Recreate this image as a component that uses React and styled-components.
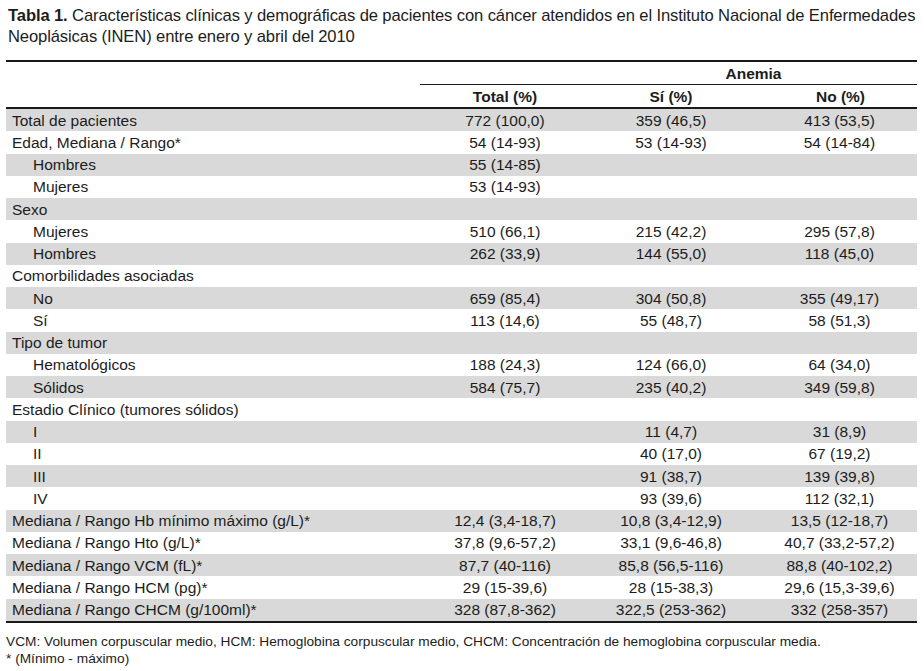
import React from "react";
import styled, { createGlobalStyle } from "styled-components";

const Global = createGlobalStyle`
  html, body { margin: 0; padding: 0; background: #fff; }
  body {
    font-family: "Liberation Sans", Arial, Helvetica, sans-serif;
    color: #1c1c1c;
  }
`;

const Page = styled.div`
  width: 924px;
  padding: 5px 0 0 0;
  box-sizing: border-box;
`;

const Title = styled.h1`
  margin: 0 0 13px 0;
  padding-left: 8px;
  font-size: 16.6px;
  line-height: 21px;
  font-weight: normal;
  letter-spacing: -0.12px;
  white-space: nowrap;
  b { font-weight: bold; }
`;

const Table = styled.div`
  margin: 0 7px 0 6px;
  border-top: 2px solid #1a1a1a;
  border-bottom: 2px solid #1a1a1a;
  font-size: 15.5px;
`;

const Grid = styled.div`
  display: grid;
  grid-template-columns: 414px 170px 162px 165px;
  align-items: center;
`;

const HeadRow = styled(Grid)`
  height: ${(p) => (p.$thick ? 22 : 23)}px;
  border-bottom: ${(p) => (p.$thick ? "2px solid #1a1a1a" : "none")};
`;

const Span = styled.div`
  grid-column: 2 / 5;
  align-self: stretch;
  border-bottom: 1px solid #1a1a1a;
  display: grid;
  grid-template-columns: 170px 1fr;
  align-items: center;
`;

const HeadCell = styled.div`
  font-weight: bold;
  text-align: center;
  line-height: 19px;
  padding-left: ${(p) => p.$pl || 0}px;
`;

const Row = styled(Grid)`
  height: 22.26px;
  background: ${(p) => (p.$gray ? "#d9d9d9" : "#fff")};
`;

const Label = styled.div`
  line-height: 19px;
  padding-left: ${(p) => (p.$indent ? 27 : 6)}px;
  white-space: nowrap;
`;

const Cell = styled.div`
  line-height: 19px;
  text-align: center;
  white-space: nowrap;
  padding-left: ${(p) => p.$pl || 0}px;
`;

const Footer = styled.div`
  margin: 10px 0 0 6px;
  font-size: 13.7px;
  line-height: 17px;
  white-space: nowrap;
`;

const rows = [
  ["Total de pacientes", false, "772 (100,0)", "359 (46,5)", "413 (53,5)"],
  ["Edad, Mediana / Rango*", false, "54 (14-93)", "53 (14-93)", "54 (14-84)"],
  ["Hombres", true, "55 (14-85)", "", ""],
  ["Mujeres", true, "53 (14-93)", "", ""],
  ["Sexo", false, "", "", ""],
  ["Mujeres", true, "510 (66,1)", "215 (42,2)", "295 (57,8)"],
  ["Hombres", true, "262 (33,9)", "144 (55,0)", "118 (45,0)"],
  ["Comorbilidades asociadas", false, "", "", ""],
  ["No", true, "659 (85,4)", "304 (50,8)", "355 (49,17)"],
  ["Sí", true, "113 (14,6)", "55 (48,7)", "58 (51,3)"],
  ["Tipo de tumor", false, "", "", ""],
  ["Hematológicos", true, "188 (24,3)", "124 (66,0)", "64 (34,0)"],
  ["Sólidos", true, "584 (75,7)", "235 (40,2)", "349 (59,8)"],
  ["Estadio Clínico (tumores sólidos)", false, "", "", ""],
  ["I", true, "", "11 (4,7)", "31 (8,9)"],
  ["II", true, "", "40 (17,0)", "67 (19,2)"],
  ["III", true, "", "91 (38,7)", "139 (39,8)"],
  ["IV", true, "", "93 (39,6)", "112 (32,1)"],
  ["Mediana / Rango Hb mínimo máximo (g/L)*", false, "12,4 (3,4-18,7)", "10,8 (3,4-12,9)", "13,5 (12-18,7)"],
  ["Mediana / Rango Hto (g/L)*", false, "37,8 (9,6-57,2)", "33,1 (9,6-46,8)", "40,7 (33,2-57,2)"],
  ["Mediana / Rango VCM (fL)*", false, "87,7 (40-116)", "85,8 (56,5-116)", "88,8 (40-102,2)"],
  ["Mediana / Rango HCM (pg)*", false, "29 (15-39,6)", "28 (15-38,3)", "29,6 (15,3-39,6)"],
  ["Mediana / Rango CHCM (g/100ml)*", false, "328 (87,8-362)", "322,5 (253-362)", "332 (258-357)"],
];

export default function App() {
  return (
    <Page>
      <Global />
      <Title>
        <b>Tabla 1.</b> Características clínicas y demográficas de pacientes con cáncer atendidos en el Instituto Nacional de Enfermedades
        <br />
        Neoplásicas (INEN) entre enero y abril del 2010
      </Title>
      <Table>
        <HeadRow>
          <div />
          <Span>
            <div />
            <HeadCell>Anemia</HeadCell>
          </Span>
        </HeadRow>
        <HeadRow $thick>
          <div />
          <HeadCell>Total (%)</HeadCell>
          <HeadCell>Sí (%)</HeadCell>
          <HeadCell $pl={12}>No (%)</HeadCell>
        </HeadRow>
        {rows.map(([label, indent, t, s, n], i) => (
          <Row key={i} $gray={i % 2 === 0}>
            <Label $indent={indent}>{label}</Label>
            <Cell>{t}</Cell>
            <Cell>{s}</Cell>
            <Cell $pl={10}>{n}</Cell>
          </Row>
        ))}
      </Table>
      <Footer>
        VCM: Volumen corpuscular medio, HCM: Hemoglobina corpuscular medio, CHCM: Concentración de hemoglobina corpuscular media.
        <br />* (Mínimo - máximo)
      </Footer>
    </Page>
  );
}
